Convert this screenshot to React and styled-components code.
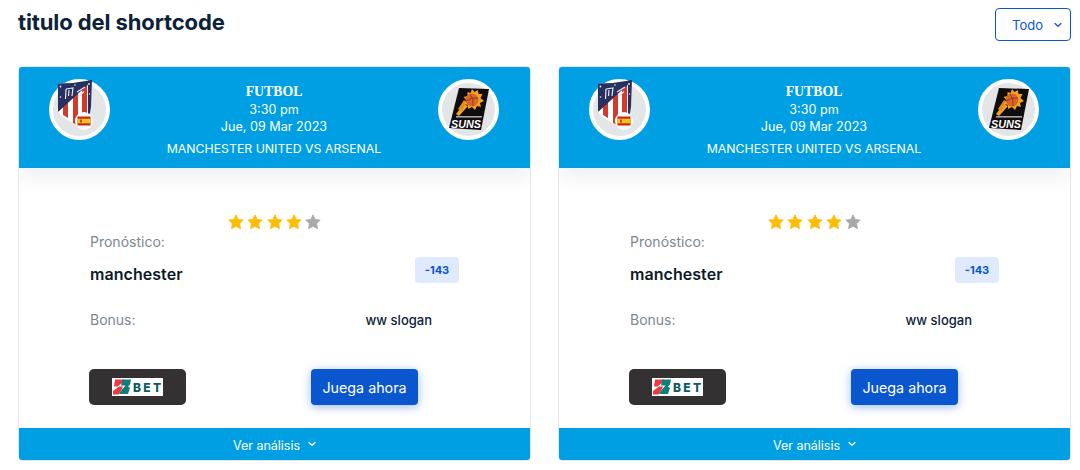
import React from "react";
import styled, { createGlobalStyle } from "styled-components";

const Global = createGlobalStyle`
  html, body { margin: 0; padding: 0; background: #fff; }
  body { font-family: Inter, "Liberation Sans", sans-serif; overflow: hidden; }
  * { box-sizing: border-box; }
`;

const Page = styled.div`
  width: 1080px;
  height: 470px;
  padding: 8px 9px 0 18px;
`;
const TopBar = styled.div`
  display: flex;
  justify-content: space-between;
  align-items: flex-start;
  height: 58px;
`;
const Title = styled.h1`
  margin: 0;
  font-size: 22px;
  line-height: 28px;
  font-weight: 700;
  letter-spacing: -0.1px;
  color: #0b2239;
`;
const Select = styled.button`
  width: 76px;
  height: 33px;
  border: 1px solid #0a56cf;
  border-radius: 4px;
  background: #fff;
  color: #0a56cf;
  display: flex;
  align-items: center;
  padding: 0 0 0 16px;
  gap: 11px;
  font: 400 13px Inter, sans-serif;
`;
const Cards = styled.div`
  display: grid;
  grid-template-columns: 513px 513px;
  gap: 27px;
`;
const Card = styled.article`
  height: 395px;
  border: 1px solid #e4e6e8;
  border-radius: 4px;
  background: #fff;
  display: flex;
  flex-direction: column;
  overflow: hidden;
`;
const Header = styled.header`
  height: 101px;
  flex: none;
  background: #009fe3;
  color: #fff;
  display: grid;
  grid-template-columns: 61px 1fr 61px;
  padding: 12px 31px 0 30px;
  box-shadow: 0 8px 20px rgba(20, 40, 70, 0.08);
  position: relative;
`;
const Badge = styled.div`
  width: 61px;
  height: 61px;
  border-radius: 50%;
  background: #e4e5e7;
  border: 4px solid #fff;
  position: relative;
`;
const Crest = styled.svg`
  display: block;
  position: absolute;
  left: ${p => p.$left}px;
  top: ${p => p.$top}px;
`;
const Match = styled.div`
  text-align: center;
  padding-top: 5px;
`;
const Sport = styled.div`
  font: 700 13.8px/16px "Liberation Serif", serif;
`;
const Info = styled.div`
  font-size: 12.6px;
  line-height: 17px;
  font-weight: 400;
  margin-top: ${p => p.$top || 0}px;
`;
const Teams = styled(Info)`
  font-size: 12.3px;
  margin-top: 5px;
`;
const Body = styled.div`
  flex: 1;
  padding: 46px 71px 0 71px;
`;
const Stars = styled.div`
  display: flex;
  justify-content: center;
  gap: 3.25px;
  height: 16px;
`;
const Label = styled.div`
  font-size: 14px;
  line-height: 18px;
  color: #7c8791;
`;
const PickLabel = styled(Label)`
  margin-top: 3px;
`;
const PickRow = styled.div`
  display: flex;
  justify-content: space-between;
  align-items: center;
  margin-top: 6px;
  height: 26px;
`;
const Pick = styled.div`
  font-size: 16px;
  font-weight: 600;
  letter-spacing: 0.05px;
  color: #0c1a26;
  margin-top: 8px;
  line-height: 20px;
`;
const Odds = styled.div`
  width: 44px;
  height: 26px;
  border-radius: 4px;
  background: #dfeafc;
  color: #0a56cf;
  font-size: 11px;
  font-weight: 700;
  display: flex;
  align-items: center;
  justify-content: center;
`;
const BonusRow = styled.div`
  display: flex;
  justify-content: space-between;
  align-items: center;
  margin-top: 27px;
  padding-right: 27px;
  height: 20px;
`;
const Slogan = styled.div`
  font-size: 13px;
  font-weight: 500;
  color: #0b2239;
`;
const Actions = styled.div`
  display: flex;
  justify-content: space-between;
  margin: 39px 0 0 -1px;
  padding-right: 41px;
`;
const Brand = styled.div`
  width: 97px;
  height: 36px;
  border-radius: 5px;
  background: #333132;
  display: flex;
  align-items: center;
  justify-content: center;
`;
const Play = styled.button`
  width: 107px;
  height: 36px;
  border: none;
  border-radius: 4px;
  background: #0a56cf;
  color: #fff;
  font: 400 14.3px Inter, sans-serif;
  box-shadow: 0 2px 10px rgba(10, 86, 207, 0.4);
`;
const Footer = styled.button`
  height: 32px;
  flex: none;
  border: none;
  background: #009fe3;
  color: #fff;
  font: 400 12.5px Inter, sans-serif;
  display: flex;
  align-items: center;
  justify-content: center;
  gap: 8px;
  padding: 3px 0 0;
`;
const FooterIcon = styled.span`
  display: flex;
  margin-top: -4px;
`;

const Chevron = () => (
  <svg width="8" height="6" viewBox="0 0 8 6" fill="none">
    <path d="M1 1.5 4 4.3 7 1.5" stroke="currentColor" strokeWidth="1.2" strokeLinecap="round" strokeLinejoin="round" />
  </svg>
);

const Star = ({ on }) => (
  <svg width="16" height="16" viewBox="0 0 16 16">
    <path
      d="M8 .8 10.2 5.4 15.2 6.1 11.6 9.6 12.5 14.7 8 12.3 3.5 14.7 4.4 9.6.8 6.1 5.8 5.4Z"
      fill={on ? "#ffbc05" : "#a8a9ab"}
      stroke={on ? "#ffbc05" : "#a8a9ab"}
      strokeWidth="0.8"
      strokeLinejoin="round"
    />
  </svg>
);

const Atletico = ({ id }) => (
  <>
    <Crest $left={5} $top={-3} width="34" height="50" viewBox="0 0 34 50">
      <defs>
        <clipPath id={id}>
          <path d="M0 3.5 Q17 3.5 34 0 L33 27 Q32 38 25 48 L15 43 Q2 37 0 31Z" />
        </clipPath>
      </defs>
      <g clipPath={`url(#${id})`}>
        <rect width="34" height="50" fill="#fff" />
        <path d="M5 30 V24 L10 20 V38 L5 35Z" fill="#d23a2c" />
        <path d="M15 16 L20 12 V46 L15 43Z" fill="#d23a2c" />
        <path d="M24 8 L29 4 V50 H24Z" fill="#d23a2c" />
        <path d="M0 0 H34 V1 L0 32Z" fill="#27305f" />
        <path d="M30 0 H34 V30 L30 42Z" fill="#27305f" />
        <path d="M8 9 L7.5 19 M8 9 L15 8 L14 16 M11 10 L10.5 16 M19 12 L27 7 M20 17 L26 11.5" stroke="#e8e8f0" strokeWidth="1.2" fill="none" />
        <circle cx="2.5" cy="6.5" r="0.9" fill="#e8e8f0" />
        <circle cx="17" cy="5" r="0.8" fill="#e8e8f0" />
        <circle cx="31" cy="4" r="0.9" fill="#e8e8f0" />
        <circle cx="2.5" cy="17" r="0.8" fill="#e8e8f0" />
        <circle cx="31.5" cy="14" r="0.7" fill="#e8e8f0" />
      </g>
    </Crest>
    <Crest $left={22} $top={29} width="18" height="18" viewBox="0 0 18 18">
      <circle cx="9" cy="9" r="9" fill="#fff" />
      <rect x="2.5" y="4.5" width="13" height="9" fill="#c8261c" />
      <rect x="2.5" y="6.7" width="13" height="4.6" fill="#f8c21c" />
      <rect x="5" y="7.5" width="2" height="3" fill="#b5532a" />
    </Crest>
  </>
);

const Suns = () => (
  <Crest $left={7} $top={5} width="41" height="43" viewBox="0 0 41 43">
    <path d="M10 0 L40 1 L32 42 L0 40Z" fill="#0f0d0e" />
    <path d="M7 26 L15 16 L19 18 L10 28Z" fill="#f0a527" />
    <path d="M9 21 L15 12 L18 14 L12 23Z" fill="#e58a1a" />
    <path d="M23 1 L25.5 4 L29 2 L29.5 6 L33.5 6 L31.5 10 L35 13 L31 15 L32 19 L28 18 L26 22 L23 19 L19 21 L19 17 L15 16 L17.5 12 L14.5 9 L18.5 8 L18.5 4 L21.5 5Z" fill="#f5a11f" />
    <circle cx="23" cy="12" r="6.4" fill="#d9652c" />
    <path d="M17 13 Q23 9 29 10 M21 6 Q25 11 24 18" stroke="#6b2412" strokeWidth=".6" fill="none" />
    <rect x="7" y="28" width="26" height="1.6" fill="#d8d8d8" opacity=".75" />
    <text x="2" y="39.5" fontFamily="'Liberation Sans', sans-serif" fontWeight="700" fontStyle="italic" fontSize="11.5" fill="#fff" textLength="30" lengthAdjust="spacingAndGlyphs">SUNS</text>
  </Crest>
);

const BetLogo = () => (
  <svg width="51" height="18" viewBox="0 0 51 18">
    <rect width="51" height="18" fill="#fff" />
    <path d="M3 1.5 H12 L10 5 L5.5 8.5 H2Z M1 13 L7 8.5 H11 L9 13 L6.5 16.5 H1Z" fill="#ea3a42" />
    <path d="M10.5 1.5 H19 L18 6.5 L16 8.5 L18 10 L16 16 H7 L10 11.5 L13.5 7.5 H9Z" fill="#0c7f7c" />
    <text x="21" y="14" fontFamily="Inter, sans-serif" fontWeight="800" fontSize="12" textLength="28" fill="#0d5a5f">BET</text>
  </svg>
);

const MatchCard = ({ id }) => (
  <Card>
    <Header>
      <Badge><Atletico id={id} /></Badge>
      <Match>
        <Sport>FUTBOL</Sport>
        <Info $top={1}>3:30 pm</Info>
        <Info>Jue, 09 Mar 2023</Info>
        <Teams>MANCHESTER UNITED VS ARSENAL</Teams>
      </Match>
      <Badge><Suns /></Badge>
    </Header>
    <Body>
      <Stars>
        <Star on /><Star on /><Star on /><Star on /><Star />
      </Stars>
      <PickLabel>Pronóstico:</PickLabel>
      <PickRow>
        <Pick>manchester</Pick>
        <Odds>-143</Odds>
      </PickRow>
      <BonusRow>
        <Label>Bonus:</Label>
        <Slogan>ww slogan</Slogan>
      </BonusRow>
      <Actions>
        <Brand><BetLogo /></Brand>
        <Play>Juega ahora</Play>
      </Actions>
    </Body>
    <Footer>Ver análisis <FooterIcon><Chevron /></FooterIcon></Footer>
  </Card>
);

export default function App() {
  return (
    <Page>
      <Global />
      <TopBar>
        <Title>titulo del shortcode</Title>
        <Select>Todo <Chevron /></Select>
      </TopBar>
      <Cards>
        <MatchCard id="atm-a" />
        <MatchCard id="atm-b" />
      </Cards>
    </Page>
  );
}
